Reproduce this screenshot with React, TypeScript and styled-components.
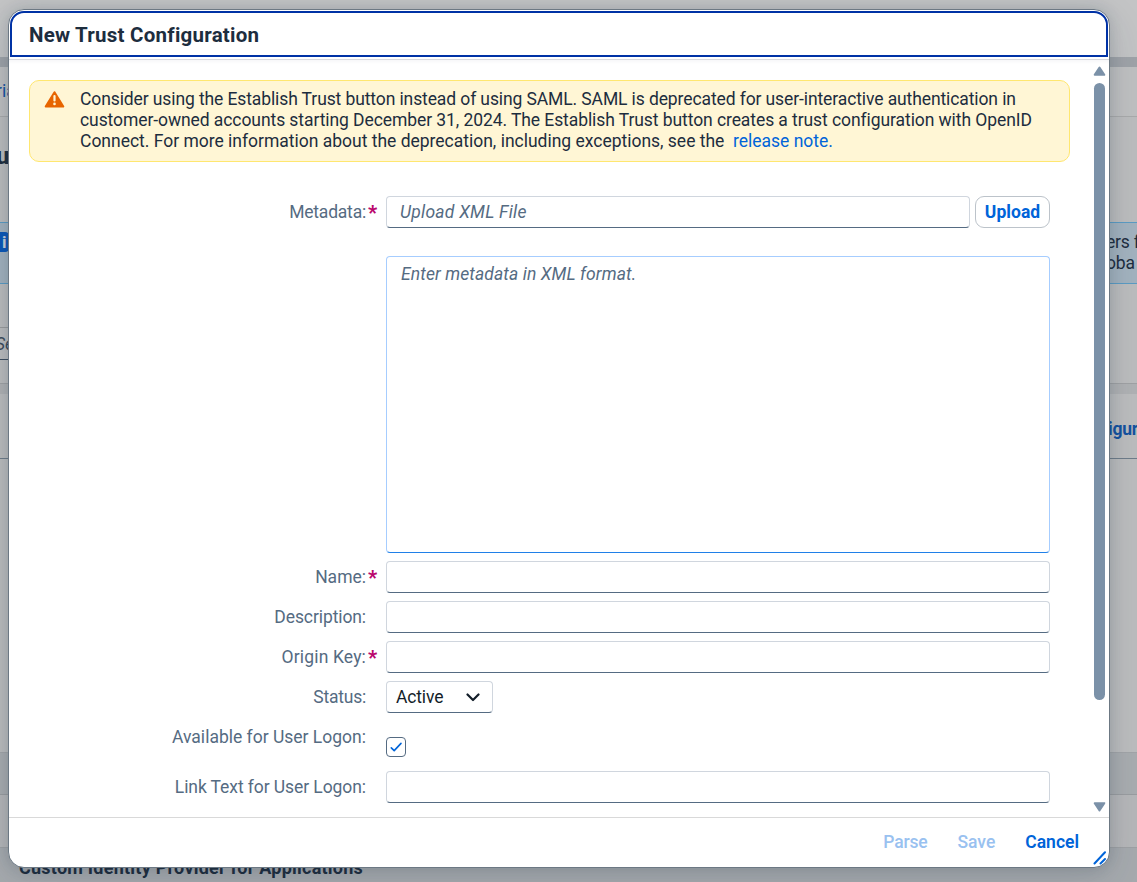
import React from "react";
import styled, { createGlobalStyle } from "styled-components";

const Global = createGlobalStyle`
  * { box-sizing: border-box; }
  body { margin: 0; overflow: hidden; font-family: Roboto, "Liberation Sans", sans-serif; font-size: 17.5px; color: #1d2d3e; }
`;

const Text = styled.span<{ $track?: number }>`
  letter-spacing: ${(p) => p.$track ?? 0}px;
  white-space: pre;
`;

const Page = styled.div`
  position: relative;
  width: 1137px;
  height: 882px;
  overflow: hidden;
  display: flex;
  flex-direction: column;
  background: #bbbcbd;
`;

const Band = styled.div<{ $h: number; $bg?: string; $line?: string }>`
  flex: none;
  height: ${(p) => p.$h}px;
  background: ${(p) => p.$bg ?? "#bcbdbe"};
  border-bottom: ${(p) => (p.$line ? `1px solid ${p.$line}` : "none")};
  display: flex;
  align-items: center;
  justify-content: space-between;
  overflow: hidden;
`;

const LeftPeek = styled.span<{ $shift?: number }>`
  display: flex;
  white-space: pre;
  margin-left: ${(p) => p.$shift ?? 0}px;
`;

const RightPeek = styled.span`
  width: 31px;
  flex: none;
  white-space: pre;
  line-height: 21px;
  letter-spacing: -0.2px;
`;

const Crumb = styled(LeftPeek)`
  color: #14529f;
  padding-bottom: 2px;
`;

const PageTitle = styled(LeftPeek)`
  font-size: 24px;
  font-weight: 800;
  padding-bottom: 28px;
`;

const SearchBox = styled.div`
  width: 300px;
  height: 33px;
  border: 1px solid #9b9c9d;
  border-left: 0;
  border-bottom-color: #3f4f60;
  display: flex;
  align-items: center;
`;

const SearchHint = styled(LeftPeek)`
  font-style: italic;
  color: #3c4c5c;
`;

const InfoBadge = styled.span`
  width: 20px;
  height: 20px;
  margin: 0 0 22px -11px;
  padding-left: 11px;
  border-radius: 4px;
  background: #0a57b8;
  color: #c8d2dc;
  font-weight: 700;
  font-size: 17px;
  line-height: 20px;
  padding-left: 13px;
`;

const ActionPeek = styled(RightPeek)`
  width: 29px;
  padding-top: 7px;
  color: #14529f;
  font-weight: 700;
`;

const SectionTitle = styled.span`
  align-self: flex-start;
  margin-left: 19px;
  padding-top: 9px;
  font-size: 18px;
  font-weight: 700;
  line-height: 21px;
`;

const Dialog = styled.section`
  position: absolute;
  left: 8px;
  top: 9px;
  width: 1102px;
  height: 859px;
  border: 1px solid #6c7883;
  border-radius: 16px;
  background: #fff;
  display: flex;
  flex-direction: column;
  box-shadow: 0 0 14px rgba(34, 53, 72, 0.18), 0 12px 40px rgba(34, 53, 72, 0.14);
`;

const Header = styled.header`
  height: 46px;
  margin: 1px 1px 2px;
  border: 2px solid #0032a5;
  border-radius: 14px 14px 0 0;
  padding: 2px 0 0 17px;
  display: flex;
  align-items: center;
  font-size: 20.5px;
  font-weight: 700;
  flex: none;
`;

const Body = styled.div`
  flex: 1;
  min-height: 0;
  display: flex;
  justify-content: space-between;
  border-top: 1px solid #d9d9de;
  background: linear-gradient(#f7f7f9, #fff 4px);
`;

const Content = styled.div`
  width: 1061px;
  padding: 20px 0 0 20px;
`;

const Warning = styled.div`
  height: 82px;
  border: 1px solid #ffe770;
  border-radius: 10px;
  background: #fff6d5;
  display: flex;
  padding: 8px 0 0 14px;
  line-height: 21px;
`;

const WarningIcon = styled.svg`
  width: 21px;
  height: 18px;
  margin: 1px 15px 0 0;
`;

const WarningText = styled.div`
  display: flex;
  flex-direction: column;
`;

const Link = styled.a`
  color: #0064d9;
`;

const Form = styled.div`
  padding-top: 34px;
  width: 1021px;
`;

const Row = styled.div<{ $gap?: number }>`
  display: flex;
  align-items: flex-start;
  margin-bottom: ${(p) => p.$gap ?? 8}px;
`;

const Label = styled.label`
  width: 337px;
  flex: none;
  text-align: right;
  line-height: 32px;
  color: #556b82;
`;

const Star = styled.span`
  width: 20px;
  height: 32px;
  flex: none;
  padding-left: 2px;
  line-height: 34px;
  font-size: 20px;
  font-weight: 800;
  color: #ba066c;
`;

const Field = styled.div<{ $w?: number; $h?: number; $active?: boolean }>`
  width: ${(p) => p.$w ?? 664}px;
  height: ${(p) => p.$h ?? 32}px;
  border: 1px solid ${(p) => (p.$active ? "#a6cdff" : "#d0d6de")};
  border-bottom-color: ${(p) => (p.$active ? "#2080e8" : "#556b82")};
  border-radius: 4px;
  background: #fff;
  padding-left: 13px;
  line-height: 30px;
  font-style: italic;
  color: #556b82;
`;

const MetadataArea = styled(Field)`
  padding-left: 14px;
  line-height: 34px;
`;

const Select = styled(Field)`
  display: flex;
  align-items: center;
  justify-content: space-between;
  padding: 0 11px 0 9px;
  font-style: normal;
  color: #131e29;
`;

const UploadButton = styled.button`
  width: 75px;
  height: 32px;
  margin-left: 5px;
  padding: 0;
  border: 1px solid #bcc3ca;
  border-radius: 9px;
  background: #fff;
  color: #0064d9;
  font: inherit;
  font-weight: 700;
`;

const Checkbox = styled.div`
  width: 20px;
  height: 20px;
  margin-top: 16px;
  border: 1px solid #556b82;
  border-radius: 4px;
  display: flex;
  align-items: center;
  justify-content: center;
`;

const Scroll = styled.div`
  width: 13px;
  margin-right: 3px;
  padding: 6px 0 5px;
  display: flex;
  flex-direction: column;
  align-items: center;
`;

const Thumb = styled.div`
  width: 11px;
  height: 617px;
  margin: 7px 0 auto;
  border-radius: 6px;
  background: #7b91a8;
`;

const Footer = styled.footer`
  position: relative;
  height: 50px;
  flex: none;
  border-top: 1px solid #d9d9d9;
  display: flex;
  align-items: center;
  justify-content: flex-end;
  gap: 30px;
  padding: 0 30px 1px 0;
`;

const Action = styled.button<{ $disabled?: boolean }>`
  border: 0;
  padding: 0;
  background: none;
  font: inherit;
  font-weight: ${(p) => (p.$disabled ? 500 : 600)};
  color: ${(p) => (p.$disabled ? "#99c1f0" : "#0064d9")};
`;

const Grip = styled.svg`
  position: absolute;
  right: 2px;
  bottom: 2px;
`;

function FormRow({ label, track, required, gap, children }: {
  label: string; track?: number; required?: boolean; gap?: number; children: React.ReactNode;
}) {
  return (
    <Row $gap={gap}>
      <Label><Text $track={track}>{label}</Text></Label>
      <Star>{required ? "*" : ""}</Star>
      {children}
    </Row>
  );
}

export default function App() {
  return (
    <>
      <Global />
      <Page>
        <Band $h={57} $bg="#c3c4c5" />
        <Band $h={10} $bg="#9fa3a8" />
        <Band $h={50} $bg="#bfc0c1" $line="#a9aaab"><Crumb $shift={-4}>ria</Crumb></Band>
        <Band $h={106} $line="#5b9cc4"><PageTitle $shift={-4}>u</PageTitle></Band>
        <Band $h={61} $bg="#a3b3bf" $line="#5b9cc4">
          <InfoBadge>i</InfoBadge>
          <RightPeek>{"ers f\noba"}</RightPeek>
        </Band>
        <Band $h={43} />
        <Band $h={33}><SearchBox><SearchHint $shift={-5}>Se</SearchHint></SearchBox></Band>
        <Band $h={24} $line="#a0a2a4" />
        <Band $h={10} $bg="#b0b2b4" />
        <Band $h={65} $line="#6f7d8a"><span /><ActionPeek>igur</ActionPeek></Band>
        <Band $h={294} $line="#a2a5a8" />
        <Band $h={42} $bg="#a9adb0" $line="#9a9da0" />
        <Band $h={53} $bg="#b6b7b9" $line="#9ea1a4" />
        <Band $h={34} $bg="#a6aaae"><SectionTitle><Text $track={0.24}>Custom Identity Provider for Applications</Text></SectionTitle></Band>

        <Dialog>
          <Header><Text $track={0.24}>New Trust Configuration</Text></Header>
          <Body>
            <Content>
              <Warning>
                <WarningIcon viewBox="0 0 21 18">
                  <path d="M10.5 2.2 19.3 16.6H1.7Z" fill="#e76500" stroke="#e76500" strokeWidth="2" strokeLinejoin="round" />
                  <path d="M10.5 6v4.5" stroke="#fff6d5" strokeWidth="2.2" strokeLinecap="round" />
                  <circle cx="10.5" cy="13.9" r="1.3" fill="#fff6d5" />
                </WarningIcon>
                <WarningText>
                  <Text $track={-0.107}>Consider using the Establish Trust button instead of using SAML. SAML is deprecated for user-interactive authentication in</Text>
                  <Text $track={-0.08}>customer-owned accounts starting December 31, 2024. The Establish Trust button creates a trust configuration with OpenID</Text>
                  <Text $track={-0.01}>Connect. For more information about the deprecation, including exceptions, see the  <Link>release note.</Link></Text>
                </WarningText>
              </Warning>
              <Form>
                <FormRow label="Metadata:" track={-0.2} required gap={28}>
                  <Field $w={584}><Text $track={0.25}>Upload XML File</Text></Field>
                  <UploadButton><Text $track={0.05}>Upload</Text></UploadButton>
                </FormRow>
                <FormRow label="">
                  <MetadataArea $h={297} $active><Text $track={0.1}>Enter metadata in XML format.</Text></MetadataArea>
                </FormRow>
                <FormRow label="Name:" required><Field /></FormRow>
                <FormRow label="Description:" track={-0.1}><Field /></FormRow>
                <FormRow label="Origin Key:" track={0.15} required><Field /></FormRow>
                <FormRow label="Status:" track={-0.22}>
                  <Select $w={107}>
                    <Text $track={-0.15}>Active</Text>
                    <svg width="15" height="10" viewBox="0 0 15 10" fill="none">
                      <path d="M1.5 2.5 7 8 12.5 2.5" stroke="#131e29" strokeWidth="2.2" strokeLinecap="round" strokeLinejoin="round" />
                    </svg>
                  </Select>
                </FormRow>
                <FormRow label="Available for User Logon:" gap={14}>
                  <Checkbox>
                    <svg width="14" height="12" viewBox="0 0 14 12" fill="none">
                      <path d="M2.3 6.8 5.2 9.6 12 2.4" stroke="#0064d9" strokeWidth="1.6" strokeLinecap="round" strokeLinejoin="round" />
                    </svg>
                  </Checkbox>
                </FormRow>
                <FormRow label="Link Text for User Logon:" track={-0.08}><Field /></FormRow>
              </Form>
            </Content>
            <Scroll>
              <svg width="13" height="10" viewBox="0 0 13 10"><path d="M6.5 1.5 11.3 8.8h-9.6Z" fill="#7b91a8" stroke="#7b91a8" strokeWidth="2" strokeLinejoin="round" /></svg>
              <Thumb />
              <svg width="13" height="10" viewBox="0 0 13 10"><path d="M6.5 8.5 11.3 1.2h-9.6Z" fill="#7b91a8" stroke="#7b91a8" strokeWidth="2" strokeLinejoin="round" /></svg>
            </Scroll>
          </Body>
          <Footer>
            <Action $disabled><Text $track={-0.2}>Parse</Text></Action>
            <Action $disabled><Text>Save</Text></Action>
            <Action><Text>Cancel</Text></Action>
            <Grip width="14" height="14" viewBox="0 0 14 14"><path d="M1.5 12.5 12 1.2M7.5 12.5 12 8" stroke="#0064d9" strokeWidth="2" strokeLinecap="round" /></Grip>
          </Footer>
        </Dialog>
      </Page>
    </>
  );
}
